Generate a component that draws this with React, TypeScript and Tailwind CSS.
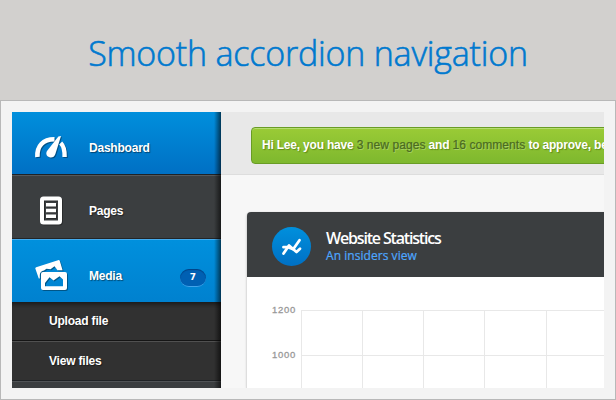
import type { ReactNode } from "react";

const labelBase =
  "font-['Liberation_Sans',Arial,sans-serif] text-[12px] leading-[16px] font-bold whitespace-nowrap text-white";
const label = `${labelBase} [text-shadow:1px_1px_1px_rgba(0,0,0,0.45)]`;

function GaugeIcon() {
  return (
    <svg width="36" height="28" viewBox="0 0 36 28" className="drop-shadow-[1px_1px_0px_rgba(0,0,0,0.35)]">
      <path d="M3.4 24C2.8 13 9 6.2 20.5 6.2" fill="none" stroke="white" strokeWidth="4.6" />
      <path d="M26.7 10C29.8 13 30.8 17 30.6 24" fill="none" stroke="white" strokeWidth="4.4" />
      <path d="M27 3L21.4 21C20.4 24 18 25 15.4 24.3C12.4 23.3 11.4 20.4 13.2 17.8L24.4 3.6Z" fill="white" />
    </svg>
  );
}

function PageIcon() {
  return (
    <svg width="24" height="30" viewBox="0 0 24 30" className="drop-shadow-[1px_1px_0px_rgba(0,0,0,0.3)]">
      <rect x="2" y="2.5" width="18" height="24" rx="1.5" fill="none" stroke="white" strokeWidth="4" />
      <path d="M6 8.7H16M6 14.5H16M6 20.3H16" stroke="white" strokeWidth="3.6" />
    </svg>
  );
}

function MediaIcon() {
  return (
    <svg width="36" height="34" viewBox="0 0 36 34" className="drop-shadow-[1px_1px_0px_rgba(0,0,0,0.35)]">
      <path d="M1.2 8.2L23 1.2Q24.4 .8 24.9 2.2L27.6 11.2H22.5L19.5 7.2L15.5 10.2L11.5 9.8L9 11.5Q5 12 4.8 16V19.5H3.8L.4 9.8Q0 8.6 1.2 8.2Z" fill="white" />
      <path fillRule="evenodd" d="M8 13H30Q32 13 32 15V29Q32 31 30 31H8Q6 31 6 29V15Q6 13 8 13ZM10 27.2H28V20.5L24.5 17.2L18.5 21.5L14.5 18.2L10 24Z" fill="white" />
    </svg>
  );
}

function NavItem({ className, icon, iconClass, text, badge }: { className: string; icon: ReactNode; iconClass: string; text: string; badge?: string }) {
  return (
    <div className={`flex shrink-0 ${className}`}>
      <div className={`w-[77px] shrink-0 ${iconClass}`}>{icon}</div>
      <span className={`mt-[28px] tracking-[-0.22px] ${label}`}>{text}</span>
      {badge && (
        <span className="mt-[29px] mr-[15px] ml-auto h-[18px] w-[26px] rounded-full border-b border-[#42a4ea] bg-[#0060b3] text-center font-['DejaVu_Sans','Liberation_Sans',sans-serif] text-[9px] leading-[17px] font-bold text-white shadow-[inset_0_1px_1px_rgba(0,35,90,0.5)]">
          {badge}
        </span>
      )}
    </div>
  );
}

function Sidebar() {
  return (
    <nav className="relative flex w-[209px] shrink-0 flex-col overflow-hidden">
      <NavItem className="h-[62px] bg-linear-to-b from-[#008fdc] to-[#0070c4]" icon={<GaugeIcon />} iconClass="pt-[21px] pl-[22px]" text="Dashboard" />
      <NavItem className="h-[65px] border-t border-b border-t-[#1e2226] border-b-[#232527] bg-[#3b3e40] shadow-[inset_0_1px_0_#55585a]" icon={<PageIcon />} iconClass="pt-[21px] pl-[28px]" text="Pages" />
      <NavItem className="h-[63px] border-t border-t-[#45acee] bg-linear-to-b from-[#0090dd] to-[#0081cf]" icon={<MediaIcon />} iconClass="pt-[19px] pl-[23px]" text="Media" badge="7" />
      <div className="h-[39px] shrink-0 border-b border-[#151515] bg-[#313131] pt-[11px] pl-[37px] shadow-[inset_0_5px_5px_-3px_rgba(0,0,0,0.55)]">
        <span className={`block tracking-[-0.2px] ${label}`}>Upload file</span>
      </div>
      <div className="h-[40px] shrink-0 border-t border-b border-t-[#505050] border-b-[#202326] bg-[#313131] pt-[11px] pl-[37px]">
        <span className={`block tracking-[-0.2px] ${label}`}>View files</span>
      </div>
      <div className="h-[7px] shrink-0 border-t border-[#505356] bg-[#3b3e40]" />
      <div className="absolute inset-y-0 right-0 w-[7px] bg-linear-to-r from-transparent to-black/60" />
    </nav>
  );
}

function Chart() {
  return (
    <div className="flex h-[111px] overflow-hidden bg-white pt-[33px]">
      <div className="-mt-[6px] flex w-[49px] shrink-0 flex-col gap-[33px] font-['Liberation_Sans',Arial,sans-serif] text-[9.5px] leading-[12px] tracking-[0.7px] text-[#999999] [-webkit-text-stroke:0.3px_#999999]">
        <span className="text-right">1200</span>
        <span className="text-right">1000</span>
      </div>
      <svg width="308" height="80" className="ml-[5px] shrink-0" shapeRendering="crispEdges">
        <path d="M0 .5H308M0 45.5H308M.5 1V80M61.5 1V80M122.5 1V80M183.5 1V80M245.5 1V80" stroke="#000000" strokeOpacity=".09" />
      </svg>
    </div>
  );
}

function Statistics() {
  return (
    <section className="mt-[37px] ml-[25px] w-[420px] rounded-tl-[5px] border-l border-[#dedede] shadow-[0_0_2px_rgba(0,0,0,0.12)]">
      <header className="flex h-[65px] rounded-tl-[4px] bg-[#3b3e40]">
        <div className="mt-[15px] ml-[25px] h-[39px] w-[39px] rounded-full bg-linear-to-b from-[#0090dd] to-[#0070c4]">
          <svg width="39" height="39" viewBox="0 0 39 39" fill="none" stroke="white" strokeLinecap="round" strokeLinejoin="round">
            <path d="M11.5 20.2H16L21.2 22.2L27.5 13.2" strokeWidth="2.8" />
            <path d="M11.5 26.5L17 18.5L24.5 25L28 21.8" strokeWidth="2.8" />
          </svg>
        </div>
        <div className="ml-[15px] pt-[15px] font-['Open_Sans','Noto_Sans',sans-serif] whitespace-nowrap">
          <h2 className="text-[16px] leading-[22px] font-semibold tracking-[-1.17px] text-white">Website Statistics</h2>
          <p className="-mt-[1px] text-[12px] leading-[16px] tracking-[0.05px] text-[#4da7ff] [-webkit-text-stroke:0.2px_#4da7ff]">An insiders view</p>
        </div>
      </header>
      <Chart />
    </section>
  );
}

export default function App() {
  return (
    <div className="flex h-[400px] w-[616px] flex-col overflow-hidden bg-[#d2d0ce]">
      <h1 className="h-[100px] shrink-0 pt-[29px] text-center font-['Open_Sans','Noto_Sans',sans-serif] text-[34px] leading-[48px] font-light tracking-[-0.2px] whitespace-nowrap text-[#0079cf] [-webkit-text-stroke:0.6px_#0079cf]">
        Smooth accordion navigation
      </h1>
      <div className="h-[300px] border border-[#b8b8b8] bg-[#f3f3f3] p-[11px]">
        <div className="flex h-[276px] overflow-hidden">
          <Sidebar />
          <main className="w-[383px] shrink-0 overflow-hidden bg-[#f7f7f7]">
            <div className="h-[63px] border-b border-[#dddddd] bg-[#e8e8e8] pt-[15px] pl-[30px]">
              <div className={`h-[37px] w-[430px] rounded-[4px] border border-[#699c25] bg-linear-to-b from-[#9acb36] to-[#7eb82e] pt-[9px] pl-[10px] tracking-[-0.2px] shadow-[inset_0_1px_0_#b6dc70] ${labelBase} [text-shadow:1px_1px_1px_rgba(60,90,0,0.5)]`}>
                Hi Lee, you have <span className="font-normal tracking-[0.07px] text-[#4b6b20] [-webkit-text-stroke:0.2px_#4b6b20] [text-shadow:1px_1px_0_rgba(255,255,255,0.25)]">3 new pages</span> and <span className="font-normal tracking-[0.07px] text-[#4b6b20] [-webkit-text-stroke:0.2px_#4b6b20] [text-shadow:1px_1px_0_rgba(255,255,255,0.25)]">16 comments</span> to approve, better get going!
              </div>
            </div>
            <Statistics />
          </main>
        </div>
      </div>
    </div>
  );
}
